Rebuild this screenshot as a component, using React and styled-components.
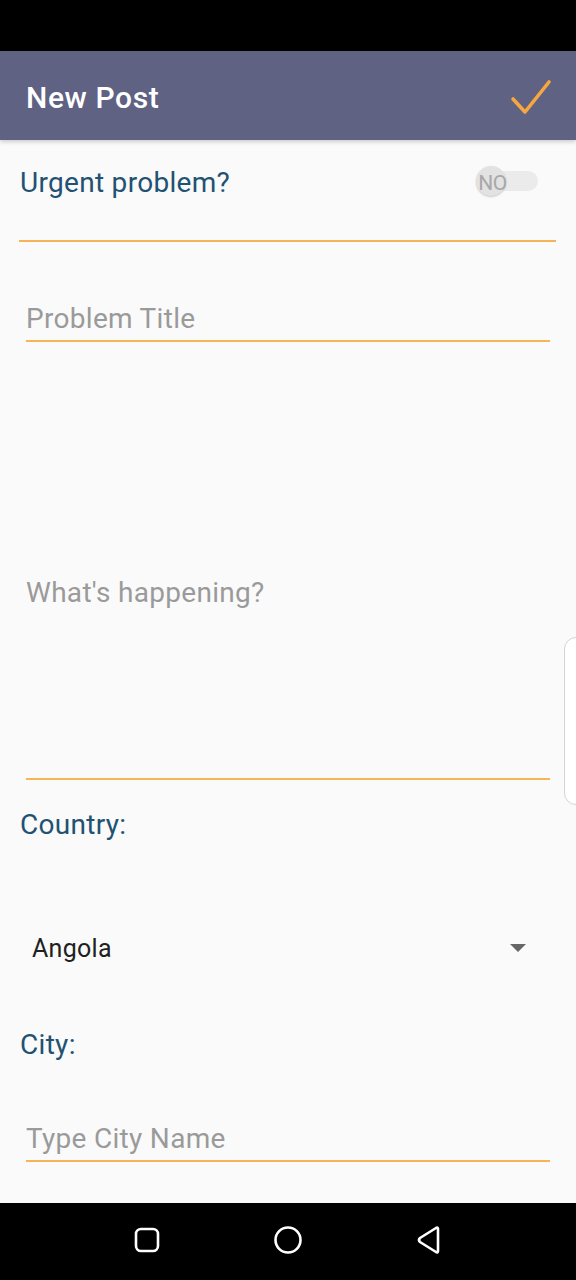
import React, { useState } from 'react'
import styled, { createGlobalStyle } from 'styled-components'

const GlobalStyle = createGlobalStyle`
  html, body {
    margin: 0;
    padding: 0;
    background: #fafafa;
  }
  * {
    box-sizing: border-box;
  }
`

const Screen = styled.div`
  position: relative;
  width: 576px;
  height: 1280px;
  display: flex;
  flex-direction: column;
  background: #fafafa;
  font-family: Roboto, "Noto Sans", sans-serif;
  overflow: hidden;
`

const StatusBar = styled.div`
  height: 51px;
  background: #000;
  flex-shrink: 0;
`

const AppBar = styled.header`
  height: 89px;
  flex-shrink: 0;
  display: flex;
  align-items: center;
  justify-content: space-between;
  padding: 4px 24px 0 26px;
  background: #5f6283;
  box-shadow: 0 2px 4px rgba(0, 0, 0, 0.18);
  position: relative;
  z-index: 1;
`

const Title = styled.h1`
  margin: 0;
  color: #fff;
  font-size: 30px;
  font-weight: 500;
  letter-spacing: 0.6px;
`

const Form = styled.main`
  flex: 1;
  display: flex;
  flex-direction: column;
`

const SwitchRow = styled.div`
  display: flex;
  justify-content: space-between;
  align-items: flex-start;
  margin: 0 20px 0 19px;
  padding: 28px 18px 42px 1px;
  border-bottom: 2px solid #f5b556;
`

const Label = styled.label`
  display: block;
  color: #1f5273;
  font-size: 28px;
  letter-spacing: 0.3px;
  line-height: 30px;
  padding-left: ${p => p.$indent || 0}px;
  margin-top: ${p => p.$top || 0}px;
`

const Toggle = styled.button`
  position: relative;
  width: 64px;
  height: 30px;
  border: 0;
  padding: 0;
  background: transparent;
  cursor: pointer;
`

const Track = styled.span`
  position: absolute;
  left: 6px;
  right: 0;
  top: 3px;
  height: 20px;
  border-radius: 10px;
  background: #ebebeb;
`

const Thumb = styled.span`
  position: absolute;
  left: 2px;
  top: -2px;
  width: 30px;
  height: 30px;
  border-radius: 50%;
  background: #e2e2e2;
  box-shadow: 0 1px 2px rgba(0, 0, 0, 0.2);
  display: flex;
  align-items: center;
  justify-content: center;
  color: #a8a8a8;
  font-size: 21px;
  font-family: Roboto, sans-serif;
  padding-top: 4px;
  padding-left: 3px;
  letter-spacing: -0.5px;
`

const Field = styled.input`
  display: block;
  margin: ${p => p.$top}px 26px 0;
  width: calc(100% - 52px);
  height: 42px;
  border: 0;
  border-bottom: 2px solid #f5b556;
  background: transparent;
  font-family: Roboto, sans-serif;
  font-size: 28px;
  letter-spacing: 0.3px;
  color: #222;
  padding: 0 0 3px;
  outline: none;
  &::placeholder {
    color: #9a9a9a;
  }
`

const Area = styled.div`
  margin: 68px 26px 0;
  height: 370px;
  display: flex;
  align-items: center;
  border-bottom: 2px solid #f5b556;
`

const AreaInput = styled.textarea`
  width: 100%;
  height: 34px;
  border: 0;
  resize: none;
  background: transparent;
  font-family: Roboto, sans-serif;
  font-size: 28px;
  letter-spacing: 0.3px;
  line-height: 32px;
  color: #222;
  padding: 0;
  outline: none;
  overflow: hidden;
  &::placeholder {
    color: #9a9a9a;
  }
`

const Select = styled.div`
  display: flex;
  align-items: center;
  justify-content: space-between;
  margin: 93px 50px 0 32px;
  height: 30px;
  font-size: 25px;
  letter-spacing: 0.3px;
  color: #212121;
`

const Caret = styled.span`
  width: 0;
  height: 0;
  border-left: 8px solid transparent;
  border-right: 8px solid transparent;
  border-top: 8px solid #666;
`

const NavBar = styled.nav`
  height: 77px;
  flex-shrink: 0;
  background: #000;
  display: flex;
  align-items: center;
  justify-content: center;
  gap: 112px;
  padding-bottom: 4px;
`

const EdgeHandle = styled.div`
  position: absolute;
  right: -12px;
  top: 637px;
  width: 24px;
  height: 168px;
  border: 1.5px solid #d4d4d4;
  border-radius: 12px;
  background: #fff;
`

function Check() {
  return (
    <svg width="42" height="40" viewBox="0 0 42 40">
      <path d="M3 21 L15 34 L39 4" fill="none" stroke="#f6a73e" strokeWidth="3.6" strokeLinecap="round" strokeLinejoin="round" />
    </svg>
  )
}

export default function App() {
  const [urgent, setUrgent] = useState(false)
  return (
    <Screen>
      <GlobalStyle />
      <StatusBar />
      <AppBar>
        <Title>New Post</Title>
        <Check />
      </AppBar>
      <Form>
        <SwitchRow>
          <Label>Urgent problem?</Label>
          <Toggle onClick={() => setUrgent(!urgent)}>
            <Track />
            <Thumb>{urgent ? 'YES' : 'NO'}</Thumb>
          </Toggle>
        </SwitchRow>
        <Field $top={58} placeholder="Problem Title" />
        <Area>
          <AreaInput placeholder="What's happening?" rows={1} />
        </Area>
        <Label $indent={20} $top={30}>Country:</Label>
        <Select>
          <span>Angola</span>
          <Caret />
        </Select>
        <Label $indent={20} $top={67}>City:</Label>
        <Field $top={60} placeholder="Type City Name" />
      </Form>
      <NavBar>
        <svg width="28" height="28" viewBox="0 0 28 28">
          <rect x="3" y="3" width="22" height="22" rx="5" fill="none" stroke="#fff" strokeWidth="2.6" />
        </svg>
        <svg width="30" height="30" viewBox="0 0 30 30">
          <circle cx="15" cy="15" r="12.5" fill="none" stroke="#fff" strokeWidth="2.6" />
        </svg>
        <svg width="28" height="30" viewBox="0 0 28 30">
          <path d="M23 4 L23 26 Q23 28 21 27 L5 17 Q3 15 5 13 L21 3 Q23 2 23 4 Z" fill="none" stroke="#fff" strokeWidth="2.6" strokeLinejoin="round" />
        </svg>
      </NavBar>
      <EdgeHandle />
    </Screen>
  )
}
